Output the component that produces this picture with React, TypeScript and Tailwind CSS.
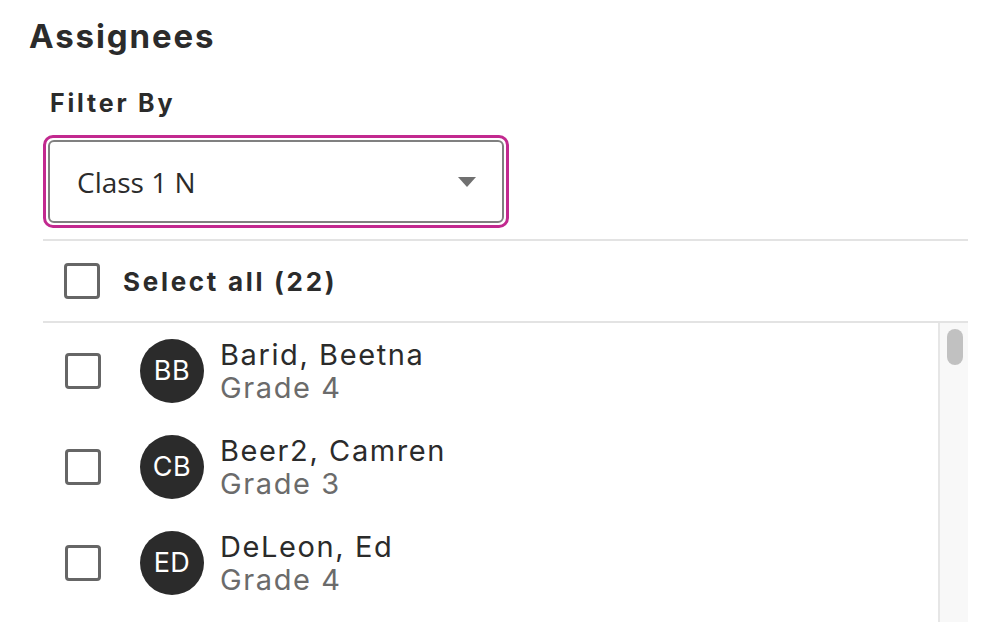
type Student = { initials: string; name: string; grade: string };

const STUDENTS: Student[] = [
  { initials: 'BB', name: 'Barid, Beetna', grade: 'Grade 4' },
  { initials: 'CB', name: 'Beer2, Camren', grade: 'Grade 3' },
  { initials: 'ED', name: 'DeLeon, Ed', grade: 'Grade 4' },
];

function Checkbox() {
  return (
    <span className="block w-[36px] h-[36px] shrink-0 rounded-[4px] border-[3px] border-[#666666] bg-white" />
  );
}

export default function App() {
  return (
    <div className="w-[1002px] h-[642px] overflow-hidden bg-white text-[#2b2b2b] font-['Inter',sans-serif]">
      <h1 className="pl-[29px] pt-[14px] text-[33px] leading-[44px] font-bold tracking-[1.9px]">
        Assignees
      </h1>

      <div className="ml-[43px] w-[925px]">
        <p className="ml-[7px] mt-[30px] text-[25px] leading-[30px] font-bold tracking-[2.8px]">
          Filter By
        </p>

        <div className="mt-[17px] w-[466px] rounded-[10px] border-[3px] border-[#c2298f] p-[2px]">
          <div className="flex h-[83px] items-center justify-between rounded-[6px] border-2 border-[#808080] pl-[27px] pr-[26px]">
            <span className="font-['Open_Sans',sans-serif] text-[28px] text-[#2b2b2b]">Class 1 N</span>
            <svg width="18" height="10" viewBox="0 0 18 10" aria-hidden="true">
              <path d="M0 0 H18 L9 10 Z" fill="#707070" />
            </svg>
          </div>
        </div>

        <div className="mt-[11px] border-t-2 border-[#e3e3e3]" />

        <div className="flex h-[80px] items-center gap-[23px] pl-[21px]">
          <Checkbox />
          <span className="text-[26px] font-bold tracking-[2.7px]">Select all (22)</span>
        </div>

        <div className="border-t-2 border-[#e3e3e3]" />

        <div className="flex h-[299px]">
          <ul className="flex-1">
            {STUDENTS.map((s) => (
              <li key={s.initials} className="flex h-[96px] items-center pl-[22px]">
                <Checkbox />
                <span className="ml-[39px] flex h-[64px] w-[64px] shrink-0 items-center justify-center rounded-full bg-[#2b2b2b] text-[27px] tracking-[0.5px] text-white">
                  {s.initials}
                </span>
                <div className="ml-[16px] flex flex-col tracking-[1.6px]">
                  <span className="text-[29px] leading-[33px]">{s.name}</span>
                  <span className="text-[29px] leading-[33px] text-[#6b6b6b]">{s.grade}</span>
                </div>
              </li>
            ))}
          </ul>
          <div className="w-[30px] border-l-2 border-[#e6e6e6] bg-[#f8f8f8] pt-[6px] pl-[7px]">
            <div className="h-[36px] w-[16px] rounded-full bg-[#c1c1c1]" />
          </div>
        </div>
      </div>
    </div>
  );
}
